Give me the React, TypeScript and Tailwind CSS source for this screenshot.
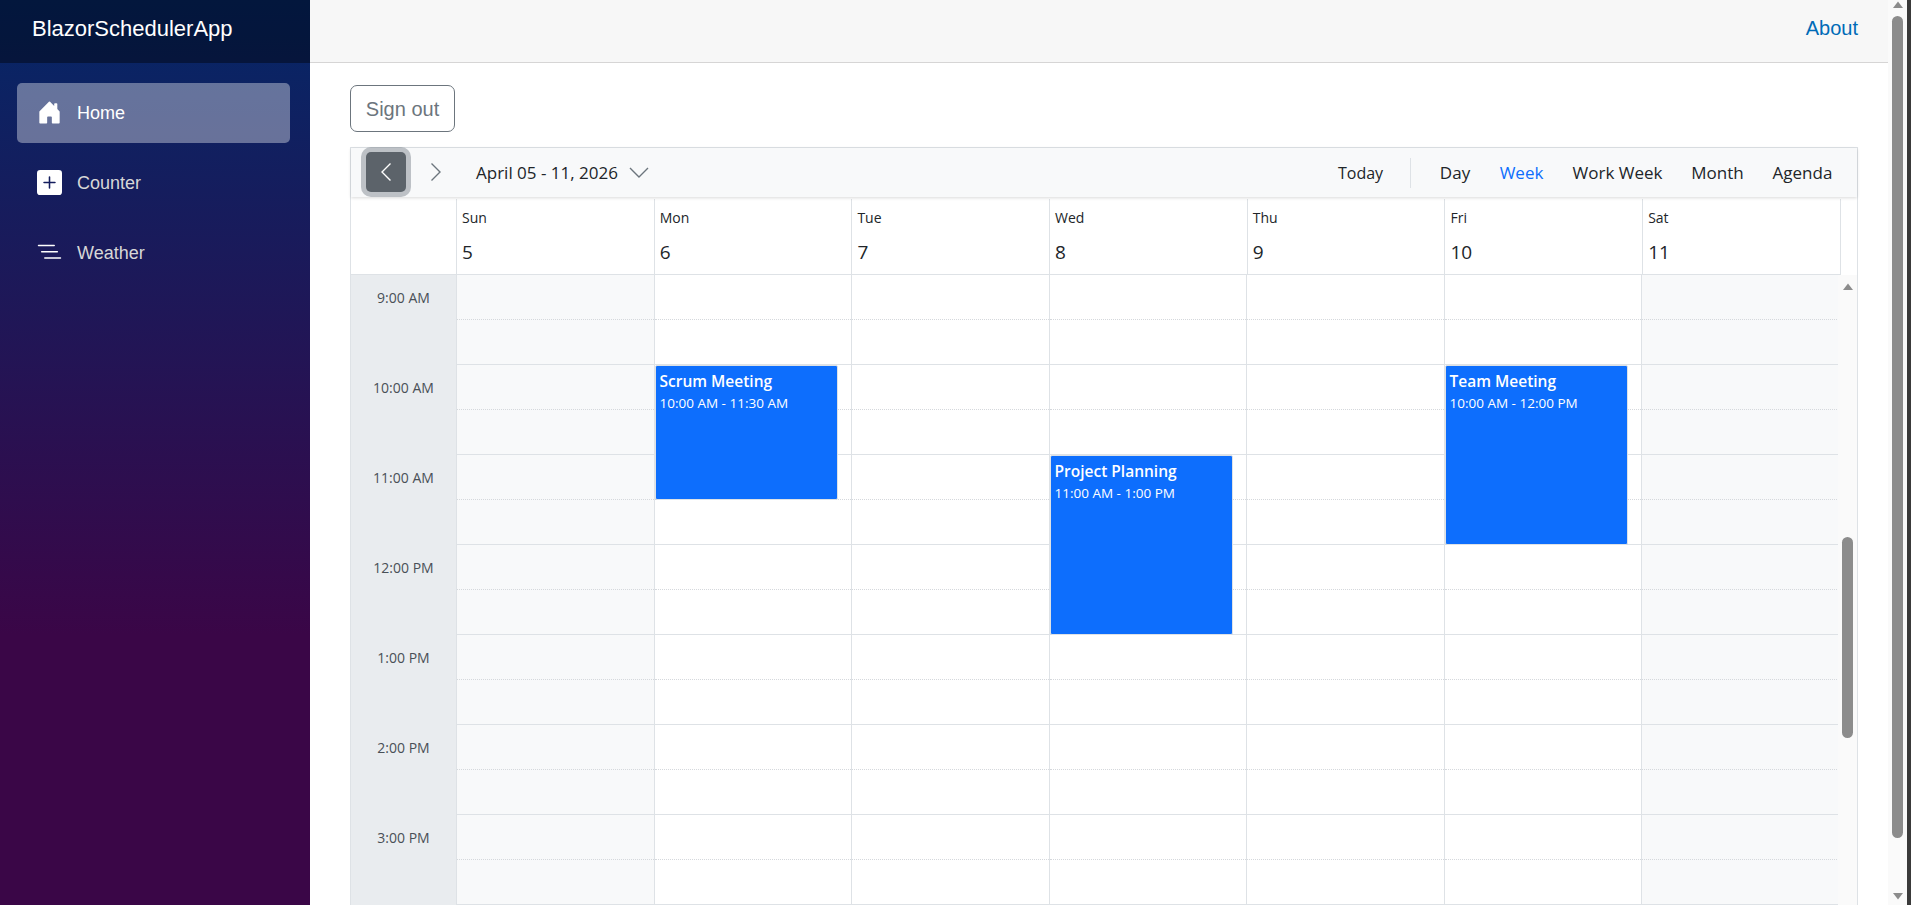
import { BsHouseDoorFill, BsPlusSquareFill, BsListNested } from "react-icons/bs";

const HOURS = ["9:00 AM", "10:00 AM", "11:00 AM", "12:00 PM", "1:00 PM", "2:00 PM", "3:00 PM"];

const DAYS = [
  { name: "Sun", date: 5, weekend: true },
  { name: "Mon", date: 6 },
  { name: "Tue", date: 7 },
  { name: "Wed", date: 8 },
  { name: "Thu", date: 9 },
  { name: "Fri", date: 10 },
  { name: "Sat", date: 11, weekend: true },
];

// one appointment per day at most in this week
const EVENTS: Record<string, { title: string; time: string; pos: string }> = {
  Mon: { title: "Scrum Meeting", time: "10:00 AM - 11:30 AM", pos: "top-[90px] h-[135px]" },
  Wed: { title: "Project Planning", time: "11:00 AM - 1:00 PM", pos: "top-[180px] h-[180px]" },
  Fri: { title: "Team Meeting", time: "10:00 AM - 12:00 PM", pos: "top-[90px] h-[180px]" },
};

function Chevron({ dir, className }: { dir: "left" | "right"; className: string }) {
  return (
    <svg width="12" height="20" viewBox="0 0 12 20" fill="none" stroke="currentColor" strokeWidth="1.4" className={className}>
      <path d={dir === "left" ? "M10.5 1.5 2 10l8.5 8.5" : "M1.5 1.5 10 10l-8.5 8.5"} />
    </svg>
  );
}

function Arrow({ up }: { up?: boolean }) {
  return (
    <svg width="10" height="7" viewBox="0 0 10 7" className="fill-[#8c8c8c]">
      <path d={up ? "M5 0.5 10 7H0z" : "M5 6.5 0 0h10z"} />
    </svg>
  );
}

function NavItem({ icon, label, active }: { icon: React.ReactNode; label: string; active?: boolean }) {
  return (
    <div className={`flex h-[60px] w-[273px] items-center rounded-[5px] pl-[20px] text-[18px] ${active ? "bg-[rgba(255,255,255,0.37)] text-white" : "text-[#d7d7d7]"}`}>
      <span className="-mt-[2px] flex w-[40px] text-white">{icon}</span>
      {label}
    </div>
  );
}

function ToolBtn({ label, width, active }: { label: string; width: string; active?: boolean }) {
  return <div className={`flex justify-center whitespace-nowrap ${width} ${active ? "text-[#0d6efd]" : "text-[#212529]"}`}>{label}</div>;
}

function HourRows() {
  return (
    <>
      {HOURS.map((h) => (
        <div key={h} className="h-[90px] border-b border-[#dee2e6]">
          <div className="h-[45px] border-b border-dotted border-[#d5d8dc]" />
        </div>
      ))}
    </>
  );
}

function Scheduler() {
  return (
    <div className="mt-[15px] flex min-h-0 flex-1 flex-col border-x border-t border-[#dee2e6] font-['Open_Sans',sans-serif]">
      {/* toolbar */}
      <div className="relative z-10 flex h-[49px] shrink-0 items-center bg-[#f8f9fa] pl-[15px] pr-[25px] text-[17px] shadow-[0_1px_3px_rgba(0,0,0,0.15)]">
        <button className="-mt-[1px] flex h-[40px] w-[40px] items-center justify-center rounded-[5px] bg-[#5c636a] text-white shadow-[0_0_0_5px_rgba(130,138,145,0.5)]">
          <Chevron dir="left" className="" />
        </button>
        <button className="-mt-[1px] ml-[10px] flex h-[40px] w-[40px] items-center justify-center text-[#6c757d]">
          <Chevron dir="right" className="" />
        </button>
        <span className="ml-[20px] w-[141px] whitespace-nowrap text-[#212529]">April 05 - 11, 2026</span>
        <svg width="20" height="11" viewBox="0 0 20 11" fill="none" stroke="#6c757d" strokeWidth="1.4" className="ml-[12px]">
          <path d="M1 1l9 9 9-9" />
        </svg>
        <div className="ml-auto flex items-center">
          <div className="text-[16px]">
            <ToolBtn label="Today" width="w-[45px]" />
          </div>
          <div className="ml-[27px] h-[30px] w-px bg-[#dee2e6]" />
          <div className="ml-[29px] flex gap-[30px]">
            <ToolBtn label="Day" width="w-[30px]" />
            <ToolBtn label="Week" width="w-[43px]" active />
            <ToolBtn label="Work Week" width="w-[89px]" />
            <ToolBtn label="Month" width="w-[51px]" />
            <ToolBtn label="Agenda" width="w-[59px]" />
          </div>
        </div>
      </div>

      {/* day header */}
      <div className="flex h-[78px] shrink-0 bg-white pt-[2px]">
        <div className="w-[106px] border-r border-b border-[#dee2e6]" />
        {DAYS.map((d) => (
          <div key={d.name} className="w-[197.7px] border-b border-r border-[#dee2e6] pl-[5px] text-[#212529]">
            <div className="mt-[9px] text-[14px] leading-[20px]">{d.name}</div>
            <div className="mt-[11px] text-[19px] leading-[26px]">{d.date}</div>
          </div>
        ))}
      </div>

      {/* time grid */}
      <div className="flex min-h-0 flex-1 overflow-hidden">
        <div className="w-[106px] shrink-0 border-r border-[#dee2e6] bg-[#e9ecef]">
          {HOURS.map((h) => (
            <div key={h} className="flex h-[90px] items-start justify-center pt-[13px] text-[14px] leading-[20px] text-[#495057]">
              {h}
            </div>
          ))}
        </div>
        <div className="flex w-[1381px] shrink-0 overflow-hidden">
          {DAYS.map((d) => {
            const ev = EVENTS[d.name];
            return (
              <div key={d.name} className={`relative w-[197.5px] shrink-0 border-r border-[#dee2e6] ${d.weekend ? "bg-[#f8f9fa]" : "bg-white"}`}>
                <HourRows />
                {ev && (
                  <div className={`absolute left-0 w-[183px] rounded-[2px] border border-[#dee2e6] bg-[#0d6efd] px-[4px] pt-[5px] text-white ${ev.pos}`}>
                    <div className="whitespace-nowrap text-[15.5px] font-semibold leading-[21px]">{ev.title}</div>
                    <div className="mt-[1px] whitespace-nowrap text-[13.5px] leading-[20px]">{ev.time}</div>
                  </div>
                )}
              </div>
            );
          })}
        </div>
        {/* inner scrollbar */}
        <div className="flex flex-1 flex-col items-center bg-[#fafafa]">
          <div className="mt-[8px] flex"><Arrow up /></div>
          <div className="mt-[247px] h-[201px] w-[11px] rounded-full bg-[#8c8c8c]" />
        </div>
      </div>
    </div>
  );
}

export default function App() {
  return (
    <div className="flex h-[905px] w-[1911px] overflow-hidden bg-white font-['Liberation_Sans',sans-serif]">
      <aside className="flex w-[310px] shrink-0 flex-col bg-[linear-gradient(180deg,#052767_0%,#3a0647_70%)]">
        <div className="flex h-[63px] items-center bg-[rgba(0,0,0,0.4)] pb-[6px] pl-[32px] text-[22px] text-white">BlazorSchedulerApp</div>
        <nav className="flex flex-col gap-[10px] pl-[17px] pt-[20px]">
          <NavItem active label="Home" icon={<BsHouseDoorFill size={25} />} />
          <NavItem label="Counter" icon={<BsPlusSquareFill size={25} />} />
          <NavItem label="Weather" icon={<BsListNested size={25} />} />
        </nav>
      </aside>

      <main className="flex min-w-0 flex-1 flex-col">
        <div className="flex h-[63px] shrink-0 items-center justify-end border-b border-[#d6d5d5] bg-[#f7f7f7] pb-[7px] pr-[30px]">
          <a className="text-[20px] text-[#006bb7]">About</a>
        </div>
        <div className="flex min-h-0 flex-1 flex-col pl-[40px] pr-[30px] pt-[22px]">
          <button className="h-[47px] w-[105px] shrink-0 rounded-[7px] border border-[#6c757d] text-[20px] text-[#6c757d]">Sign out</button>
          <Scheduler />
        </div>
      </main>

      {/* page scrollbar */}
      <div className="flex w-[19px] shrink-0 flex-col items-center bg-[#fafafa] pt-[1px]">
        <Arrow up />
        <div className="mt-[8px] h-[822px] w-[11px] rounded-full bg-[#8c8c8c]" />
        <div className="mt-auto mb-[5px] flex"><Arrow /></div>
      </div>
      <div className="w-[4px] shrink-0 bg-[#3a3a3a]" />
    </div>
  );
}
